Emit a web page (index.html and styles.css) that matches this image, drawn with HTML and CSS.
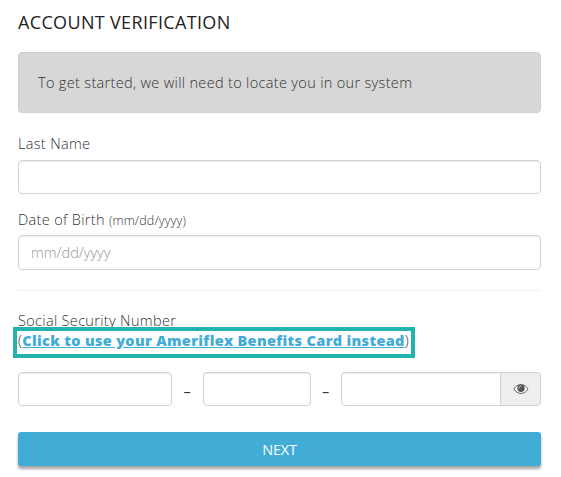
FILE: index.html
```html
<!DOCTYPE html>
<html lang="en">
<head>
	<meta charset="utf-8">
	<meta name="viewport" content="width=device-width, initial-scale=1">

	<title>Account Verification</title>

	<link rel="stylesheet" href="styles.css">
</head>
<body>
	<div class="container">
		<h1 class="title">ACCOUNT VERIFICATION</h1>

		<div class="well">To get started, we will need to locate you in our system</div>

		<form class="verify-form">
			<div class="form-group">
				<label class="label" for="lastName">Last Name</label>
				<input type="text" id="lastName" class="input-field">
			</div>

			<div class="form-group birth-group">
				<label class="label" for="birthDate">Date of Birth <small class="hint">(mm/dd/yyyy)</small></label>
				<input type="text" id="birthDate" class="input-field" placeholder="mm/dd/yyyy">
			</div>

			<hr class="divider">

			<!-- Social security number -->
			<label class="label ssn-label" for="ssn1">Social Security Number</label>
			<div class="card-switch">(<a href="#" class="card-link">Click to use your Ameriflex Benefits Card instead</a>)</div>

			<div class="ssn-row">
				<input type="text" id="ssn1" class="input-field ssn-first">
				<span class="dash">–</span>
				<input type="text" class="input-field ssn-second">
				<span class="dash">–</span>
				<div class="input-group">
					<input type="text" class="input-field ssn-last">
					<span class="addon">
						<svg class="eye" width="16" height="12" viewBox="0 0 16 12">
							<path d="M1 6C2.700 3.100 5.200 1.600 8 1.600S13.300 3.100 15 6C13.300 8.900 10.800 10.400 8 10.400S2.700 8.900 1 6Z" fill="#fff" stroke="#666" stroke-width="1"/>
							<circle cx="8" cy="5.200" r="3.700" fill="#555"/>
							<path d="M5.900 5.100C5.900 3.900 6.800 3 8 3" fill="none" stroke="#eee" stroke-width=".8" stroke-linecap="round"/>
						</svg>
					</span>
				</div>
			</div>

			<button type="button" class="btn-next">NEXT</button>
		</form>
	</div>
</body>
</html>
```

FILE: styles.css
```css
* {
	box-sizing: border-box;
}

body {
	margin: 0;
	background-color: #fff;
	color: #333;
	font-family: "Open Sans", sans-serif;
	font-size: 14.5px;
	font-weight: 300;
	letter-spacing: 0.33px;
	line-height: 20px;
}

.container {
	padding: 10px 20px 0 18px;
	height: 477px;
	overflow: hidden;
}

.title {
	margin: 0 0 18px;
	color: #222;
	font-size: 18px;
	font-weight: 400;
	letter-spacing: 0.34px;
	line-height: 24px;
}

.well {
	height: 61px;
	margin-bottom: 21px;
	padding: 20px 19px;
	background-color: #d7d7d7;
	border: 1px solid #d0d0d0;
	border-radius: 4px;
}

/* Form */
.form-group {
	margin-bottom: 16px;
}

.label {
	display: block;
	margin-bottom: 6px;
}

.hint {
	font-size: 12.5px;
	letter-spacing: 0.15px;
}

.input-field {
	display: block;
	width: 100%;
	height: 34px;
	padding: 6px 12px;
	background-color: #fff;
	border: 1px solid #d2d2d2;
	border-radius: 4px;
	box-shadow: inset 0 1px 1px rgba(0, 0, 0, 0.075);
	font: inherit;
	outline: none;
}

.input-field::placeholder {
	color: #999;
	opacity: 1;
}

.birth-group {
	margin-bottom: 20px;
}

.birth-group .label {
	margin-bottom: 4px;
}

.birth-group .input-field {
	height: 35px;
	padding-bottom: 7px;
}

.divider {
	margin: 0 0 20px;
	border: 0;
	border-top: 1px solid #f0f0f0;
}

.ssn-label {
	margin-bottom: 0;
}

.card-switch {
	position: relative;
	margin-bottom: 21px;
}

/* Frame drawn over the label above it */
.card-switch::after {
	content: "";
	position: absolute;
	top: -4px;
	left: -5px;
	box-sizing: border-box;
	width: 402px;
	height: 31px;
	border: 4px solid #23b2ad;
}

.card-link {
	color: #41acd6;
	font-weight: 800;
}

.ssn-row {
	display: flex;
	margin-bottom: 26px;
}

.ssn-first {
	width: 154px;
}

.ssn-second {
	width: 108px;
}

.dash {
	flex: 1;
	padding-top: 10px;
	font-weight: 400;
	text-align: center;
}

.input-group {
	display: flex;
	width: 200px;
}

.ssn-last {
	flex: 1;
	width: auto;
	min-width: 0;
	border-radius: 4px 0 0 4px;
}

.addon {
	display: flex;
	align-items: center;
	justify-content: center;
	width: 40px;
	background-color: #eee;
	border: 1px solid #d2d2d2;
	border-left: 0;
	border-radius: 0 4px 4px 0;
}

.btn-next {
	display: block;
	width: 100%;
	height: 34px;
	padding: 0;
	background-color: #41acd6;
	border: 0;
	border-radius: 3px;
	box-shadow: 0 3px 3px rgba(0, 0, 0, 0.35);
	color: #fff;
	font-family: inherit;
	font-size: 14.5px;
	font-weight: 400;
	letter-spacing: -0.2px;
}
```
